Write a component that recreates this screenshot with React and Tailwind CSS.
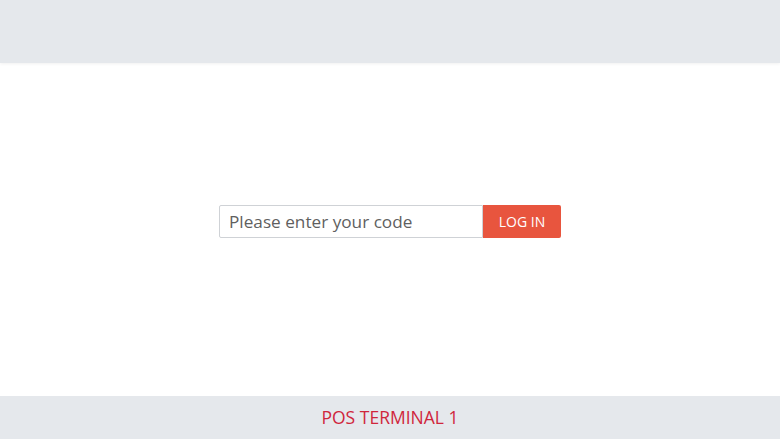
export default function App() {
  return (
    <div className="flex h-[439px] w-[780px] flex-col bg-white" style={{ fontFamily: '"Open Sans", sans-serif' }}>
      <header className="h-[63px] shrink-0 bg-[#e5e8ec] shadow-[0_1px_3px_rgba(0,0,0,0.06)]" />
      <main className="flex flex-1 items-center justify-center pb-[16px]">
        <div className="flex h-[33px] w-[342px]">
          <input
            type="text"
            placeholder="Please enter your code"
            className="h-full w-[264px] rounded-l-[2px] border border-[#cfd2d6] bg-white px-[9px] text-[17.2px] text-[#555] placeholder:text-[#5f5f5f] outline-none"
          />
          <button className="h-full flex-1 rounded-r-[2px] bg-[#e8553e] text-[14px] text-white">
            LOG IN
          </button>
        </div>
      </main>
      <footer className="flex h-[43px] shrink-0 items-center justify-center bg-[#e5e8ec] text-[17.5px] text-[#d0263c]">
        POS TERMINAL 1
      </footer>
    </div>
  );
}
